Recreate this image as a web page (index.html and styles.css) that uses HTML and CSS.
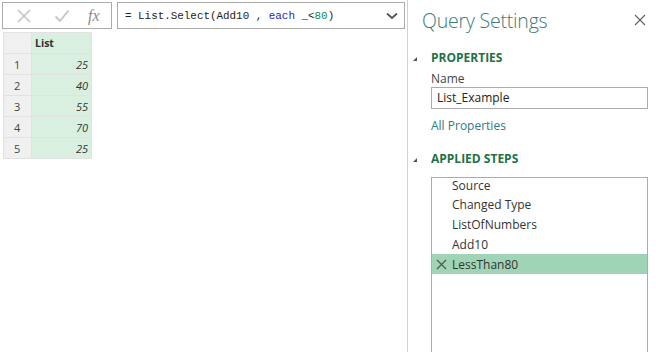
FILE: index.html
```html
<!DOCTYPE html>
<html lang="en">
<head>
    <meta charset="UTF-8">
    <title>Power Query - List.Select</title>
    <link rel="stylesheet" href="styles.css">
</head>
<body>
    <div class="editor">
        <div class="main">
            <div class="formula-bar">
                <div class="formula-tools">
                    <svg class="tool" width="16" height="14" viewBox="0 0 16 14"><path d="M2 1 L14 13 M14 1 L2 13" stroke="#c4c4c4" stroke-width="1.6" fill="none"/></svg>
                    <svg class="tool" width="16" height="14" viewBox="0 0 16 14"><path d="M1.5 7.5 L6 12 L14.5 1.5" stroke="#c4c4c4" stroke-width="1.8" fill="none"/></svg>
                    <span class="fx">fx</span>
                </div>
                <div class="formula">
                    <span class="code">= List.Select(Add10 , <span class="kw">each</span> _&lt;<span class="num">80</span>)</span>
                    <svg class="chevron" width="12" height="8" viewBox="0 0 12 8"><path d="M1 1.5 L6 6 L11 1.5" stroke="#555" stroke-width="1.8" fill="none"/></svg>
                </div>
            </div>

            <table class="grid">
                <tr><th class="idx"></th><th class="col">List</th></tr>
                <tr><td class="idx">1</td><td class="val">25</td></tr>
                <tr><td class="idx">2</td><td class="val">40</td></tr>
                <tr><td class="idx">3</td><td class="val">55</td></tr>
                <tr><td class="idx">4</td><td class="val">70</td></tr>
                <tr><td class="idx">5</td><td class="val">25</td></tr>
            </table>
        </div>

        <div class="settings">
            <div class="settings-head">
                <h1>Query Settings</h1>
                <svg class="close" width="12" height="12" viewBox="0 0 12 12"><path d="M1 1 L11 11 M11 1 L1 11" stroke="#666" stroke-width="1.2" fill="none"/></svg>
            </div>

            <h2 class="section"><span class="tri"></span>PROPERTIES</h2>
            <div class="label">Name</div>
            <div class="name-box">List_Example</div>
            <div class="link">All Properties</div>

            <h2 class="section steps-head"><span class="tri"></span>APPLIED STEPS</h2>
            <div class="steps">
                <ul>
                    <li>Source</li>
                    <li>Changed Type</li>
                    <li>ListOfNumbers</li>
                    <li>Add10</li>
                    <li class="active"><svg class="del" width="11" height="11" viewBox="0 0 11 11"><path d="M1 1 L10 10 M10 1 L1 10" stroke="#555" stroke-width="1.2" fill="none"/></svg>LessThan80</li>
                </ul>
            </div>
        </div>
    </div>
</body>
</html>
```

FILE: styles.css
```css
* { box-sizing: border-box; }
html, body { margin: 0; height: 100%; background: #fff; }
body { font-family: "Open Sans", "Segoe UI", Arial, sans-serif; font-size: 12px; color: #333; overflow: hidden; }
.editor { display: flex; height: 352px; }

.main { width: 407px; flex: none; padding: 2px 0 0 2px; }
.formula-bar { display: flex; gap: 5px; height: 27px; }
.formula-tools { width: 110px; border: 1px solid #ababab; display: flex; align-items: center; padding-left: 13px; gap: 22px; }
.fx { font-family: "Liberation Serif", "Times New Roman", serif; font-style: italic; font-size: 16px; color: #8a8a8a; margin-left: -4px; }
.formula { width: 288px; border: 1px solid #ababab; display: flex; align-items: center; justify-content: space-between; padding: 0 6px 0 7px; }
.code { font-family: "Liberation Mono", "DejaVu Sans Mono", monospace; font-size: 10.9px; color: #222; white-space: pre; }
.kw { color: #1a1ad0; }
.num { color: #098658; }
.chevron { margin-top: 1px; }

.grid { border-collapse: collapse; margin: 3px 0 0 1px; font-size: 11px; }
.grid th, .grid td { height: 21px; border: 1px solid #e2e2e2; padding: 0; }
.grid .idx { width: 28px; background: #f0f0f0; text-align: left; padding-left: 10px; color: #444; }
.grid th.col { width: 60px; background: #d9f0e1; text-align: left; padding-left: 3px; font-weight: bold; font-size: 10.5px; color: #333; }
.grid .val { background: #d9f0e1; text-align: right; padding-right: 3px; font-style: italic; color: #333; }

.settings { flex: 1; border-left: 1px solid #d2d2d2; padding: 7px 8px 0 5px; }
.settings-head { display: flex; justify-content: space-between; align-items: center; height: 26px; padding-left: 9px; }
.settings-head h1 { margin: 0; font-size: 19.5px; font-weight: 300; color: #3b7a78; letter-spacing: -0.2px; }
.close { margin-right: 2px; }

.section { margin: 16px 0 0; font-size: 12px; font-weight: 700; color: #1e7145; line-height: 18px; display: flex; align-items: center; }
.tri { width: 0; height: 0; border-left: 4px solid transparent; border-bottom: 4px solid #555; margin-right: 14px; margin-top: 2px; }
.label { margin: 4px 0 0 18px; line-height: 16px; color: #444; }
.name-box { margin-left: 18px; height: 22px; border: 1px solid #ababab; padding-left: 5px; line-height: 20px; color: #222; }
.link { margin: 8px 0 0 18px; line-height: 18px; color: #2a7a86; }
.steps-head { margin-top: 15px; }

.steps { margin: 9px 0 0 18px; height: 175px; border: 1px solid #ababab; border-bottom: none; overflow: hidden; }
.steps ul { list-style: none; margin: 0; padding: 0; }
.steps li { height: 20px; line-height: 21px; padding-left: 20px; color: #333; position: relative; }
.steps li:first-child { height: 16px; line-height: 15px; }
.steps li.active { background: #9fd5b6; }
.del { position: absolute; left: 4px; top: 5px; }
```
